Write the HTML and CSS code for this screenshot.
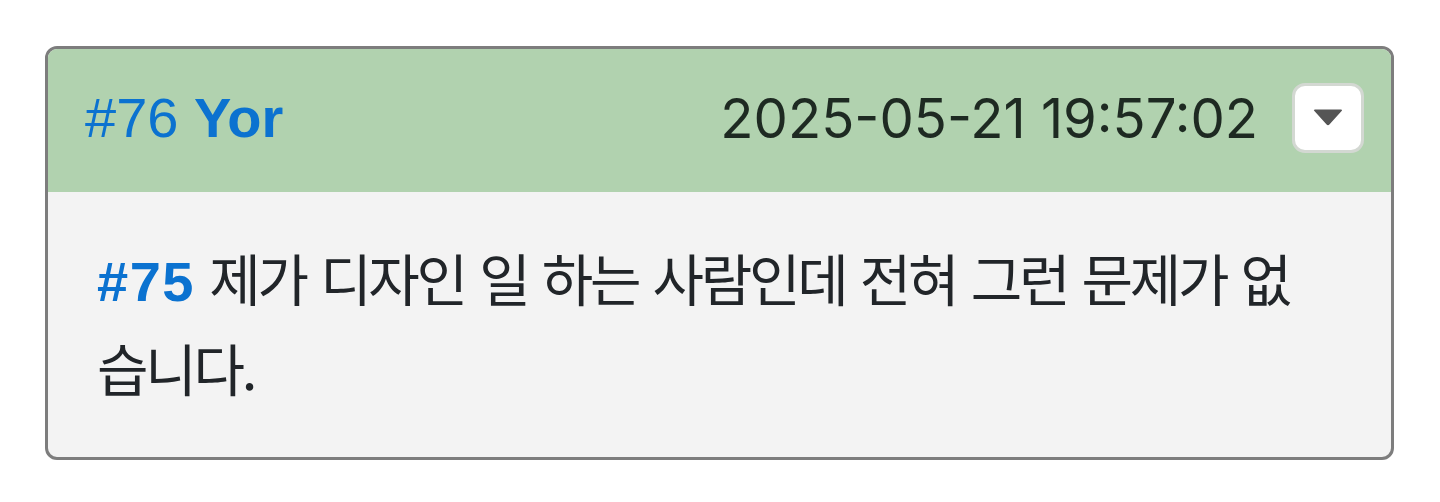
FILE: index.html
```html
<!DOCTYPE html>
<html lang="ko">
<head>
<meta charset="utf-8">
<title>댓글</title>
<link rel="stylesheet" href="styles.css">
</head>
<body>
<article class="comment">
  <header class="comment-head">
    <div class="comment-author">
      <a class="comment-no" href="#c76">#76</a>
      <span class="comment-name">Yor</span>
    </div>
    <time class="comment-time" datetime="2025-05-21T19:57:02">2025-05-21 19:57:02</time>
    <button class="comment-menu" type="button" aria-label="메뉴">
      <svg width="30" height="19" viewBox="0 0 30 19" aria-hidden="true">
        <path d="M2 1.5 H28 Q30 1.5 28.6 3 L16.4 16.6 Q15 18 13.6 16.6 L1.4 3 Q0 1.5 2 1.5 Z" fill="#555"/>
      </svg>
    </button>
  </header>
  <div class="comment-body">
    <p class="comment-text"><a class="comment-ref" href="#c75">#75</a> 제가 디자인 일 하는 사람인데 전혀 그런 문제가 없습니다.</p>
  </div>
</article>
</body>
</html>
```
FILE: styles.css
```css
html, body {
  margin: 0;
  padding: 0;
  background: #ffffff;
}

body {
  padding: 46px 46px 0 45px;
  font-family: "Liberation Sans", Arial, "Noto Sans CJK KR", sans-serif;
}

.comment {
  border: 3px solid #7d7d7d;
  border-radius: 12px;
  overflow: hidden;
  background: #f3f3f3;
  height: 414px;
  box-sizing: border-box;
  display: flex;
  flex-direction: column;
}

.comment-head {
  background: #b1d2af;
  height: 143px;
  box-sizing: border-box;
  flex: none;
  display: flex;
  align-items: center;
  padding: 0 27px 6px 37px;
}

.comment-author {
  flex: 1;
  font-size: 56px;
  color: #0b72d0;
}

.comment-no {
  color: inherit;
  text-decoration: none;
}

.comment-name {
  font-weight: 700;
}

.comment-time {
  font-family: Inter, "Liberation Sans", sans-serif;
  font-size: 54.5px;
  color: #1e2a22;
  margin-right: 34px;
}

.comment-menu {
  width: 72px;
  height: 70px;
  border: 3px solid #d3d8d2;
  border-radius: 13px;
  background: #ffffff;
  padding: 0;
  display: flex;
  align-items: center;
  justify-content: center;
}

.comment-body {
  padding: 40px 70px 0 49px;
}

/* Hangul body text; Latin pieces fall back to Liberation Sans */
.comment-text {
  margin: 0;
  font-family: "Noto Sans CJK KR", sans-serif;
  font-size: 56px;
  line-height: 90px;
  letter-spacing: -3.3px;
  word-spacing: 2px;
  color: #212529;
}

.comment-ref {
  font-family: "Liberation Sans", Arial, sans-serif;
  line-height: 56px;
  color: #0b72d0;
  font-weight: 700;
  letter-spacing: 1.5px;
  text-decoration: none;
}
```
